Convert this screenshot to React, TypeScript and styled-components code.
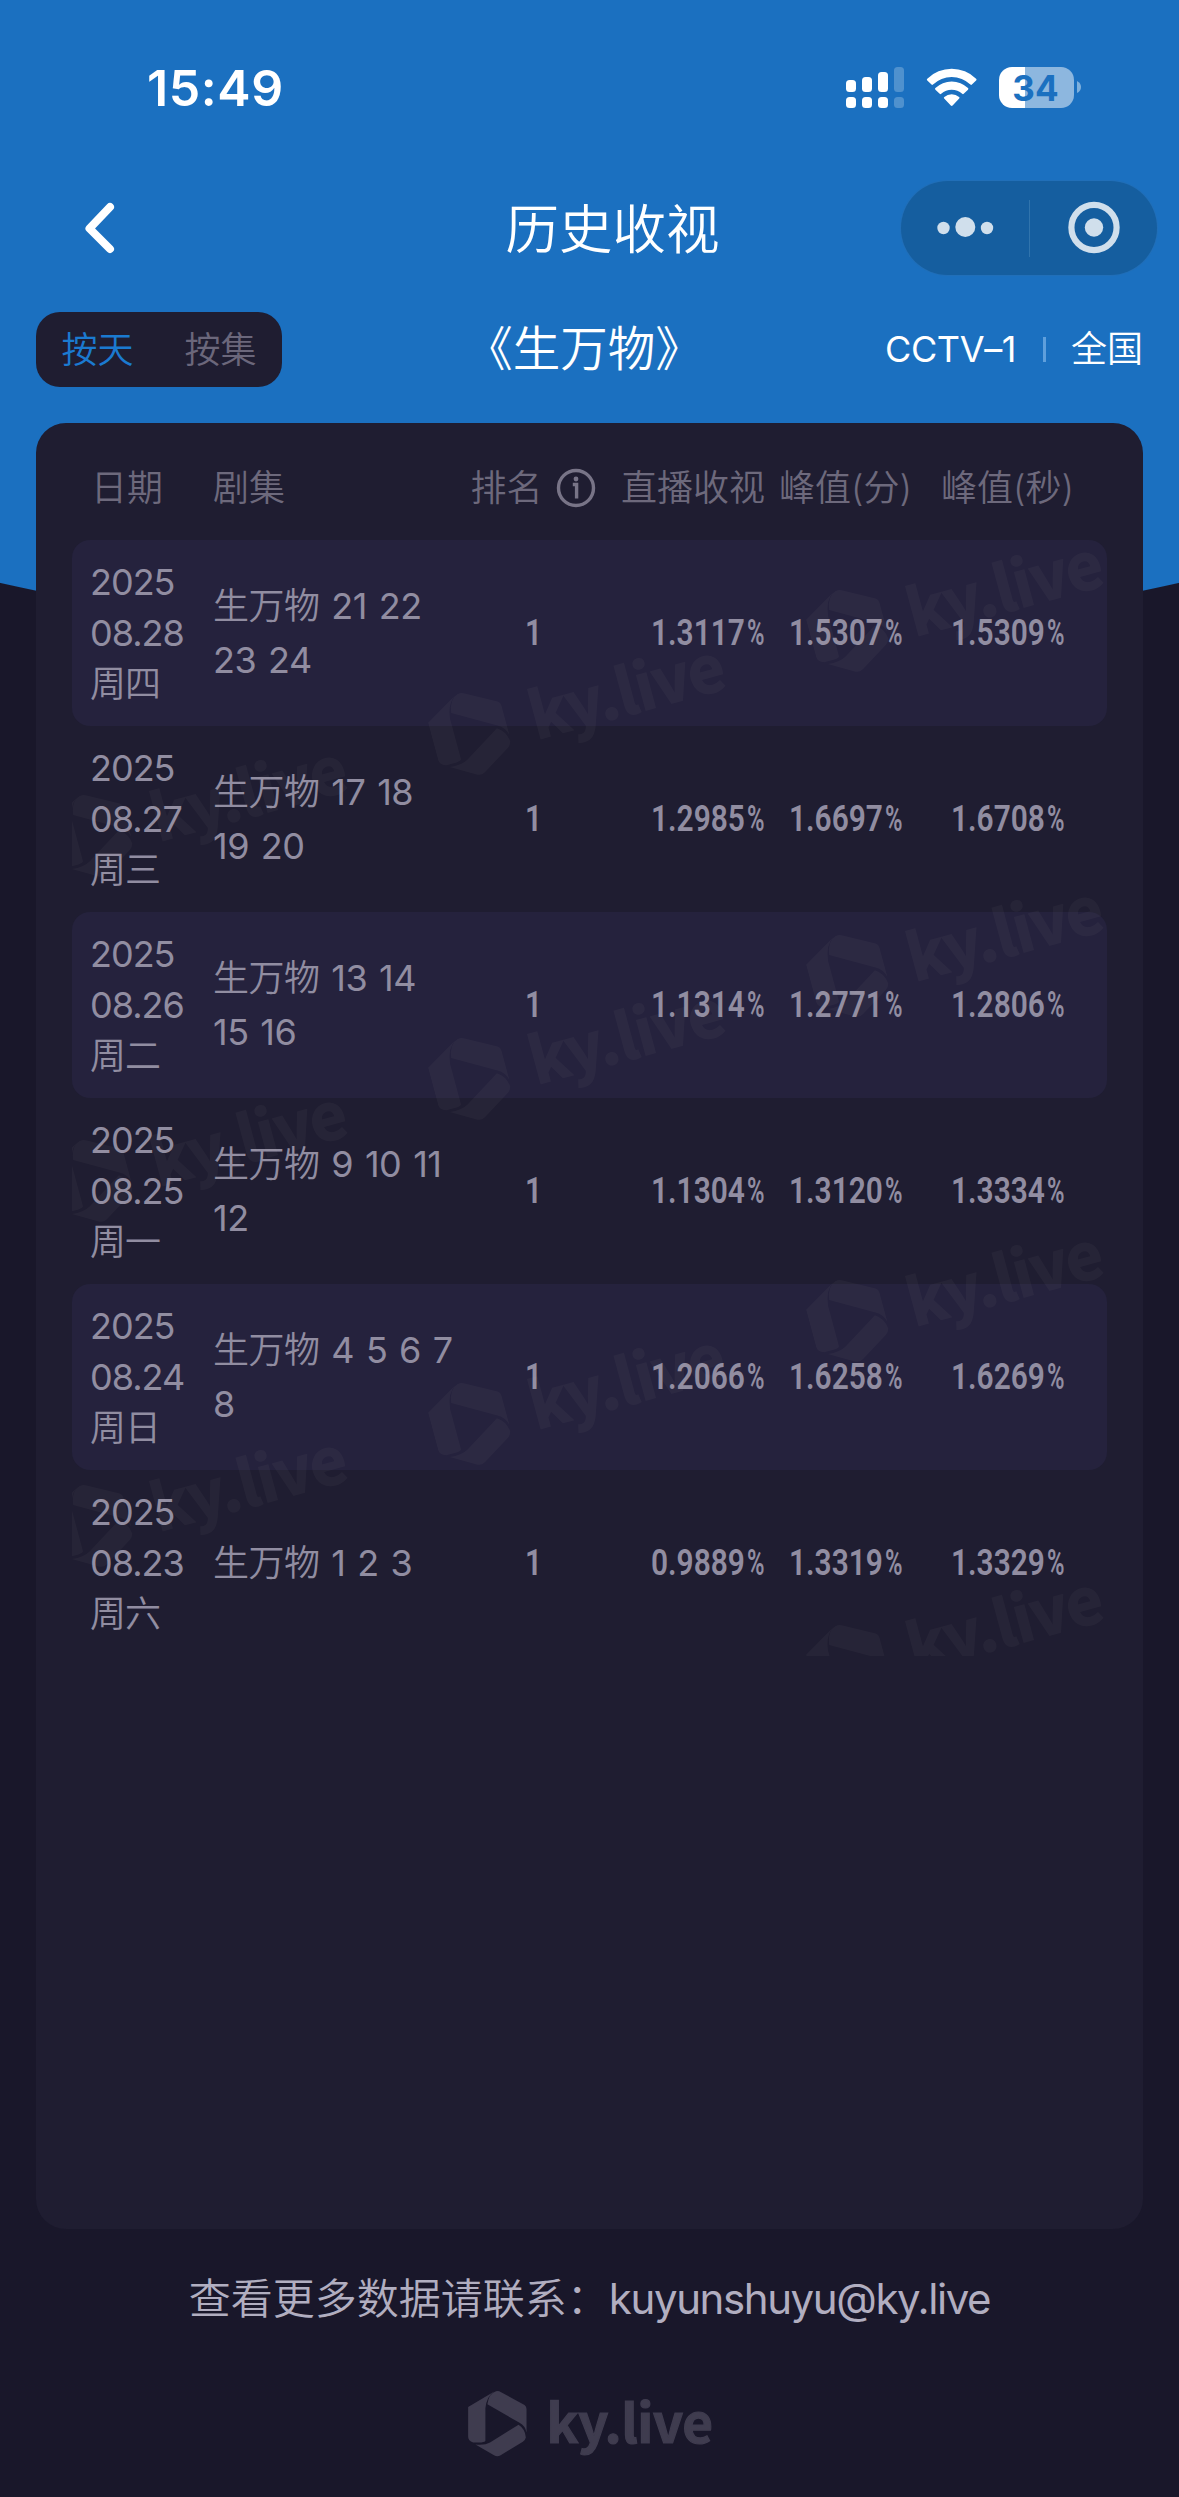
import React from "react";
import styled, { createGlobalStyle } from "styled-components";

const BLUE = "#1b70c0";
const DARK = "#19172a";
const PANEL = "#1f1d31";

const GlobalStyle = createGlobalStyle`
  * { box-sizing: border-box; }
  body { margin: 0; background: ${DARK}; }
`;

const Page = styled.div`
  width: 1179px;
  height: 2497px;
  overflow: hidden;
  display: flex;
  flex-direction: column;
  font-family: Inter, "Noto Sans CJK SC DemiLight", "Noto Sans CJK SC", sans-serif;
  font-size: 36px;
  font-weight: 400;
  color: #fff;
  background: radial-gradient(circle at 50% -2052px, ${BLUE} 2699.5px, ${DARK} 2700.5px);
`;

const StatusBar = styled.div`
  height: 176px;
  display: flex;
  justify-content: space-between;
  padding: 0 98px 0 147px;
`;

const Clock = styled.div`
  height: 176px;
  line-height: 176px;
  font-size: 50px;
  font-weight: 600;
  letter-spacing: 0.6px;
`;

const StatusIcons = styled.div`
  display: flex;
  align-items: flex-start;
  padding-top: 67px;
`;

const SignalIcon = styled.svg`
  width: 58px;
  height: 41px;
  margin-right: 22px;
`;

const WifiIcon = styled.svg`
  width: 52px;
  height: 41px;
  margin-right: 21px;
`;

const Battery = styled.div`
  width: 75px;
  height: 41px;
  border-radius: 13px;
  background: linear-gradient(90deg, #fff 26px, #8db7df 26px);
  color: ${BLUE};
  font-size: 35px;
  font-weight: 700;
  line-height: 42px;
  text-align: center;
  padding-right: 2px;
`;

const BatteryCap = styled.svg`
  width: 4px;
  height: 12px;
  margin: 14px 0 0 3px;
`;

const NavBar = styled.div`
  height: 104px;
  display: grid;
  grid-template-columns: 483px 1fr 414px;
  align-items: center;
  padding-right: 22px;
`;

const BackIcon = styled.svg`
  width: 30px;
  height: 52px;
  margin-left: 85px;
`;

const PageTitle = styled.h1`
  margin: 0 0 0 -1px;
  padding-top: 4px;
  font-size: 53.5px;
  font-weight: 350;
  line-height: 100px;
  text-align: center;
  white-space: nowrap;
`;

const Capsule = styled.div`
  justify-self: end;
  width: 256px;
  height: 94px;
  border-radius: 47px;
  background: #155e9f;
  box-shadow: 0 0 0 1px rgba(40, 110, 175, 0.5);
`;

const FilterBar = styled.div`
  height: 143px;
  display: grid;
  grid-template-columns: 395px 1fr 400px;
  align-items: center;
  padding: 0 36px 5px 36px;
`;

const Tabs = styled.div`
  display: flex;
  width: 246px;
  height: 75px;
  border-radius: 24px;
  background: ${PANEL};
`;

const Tab = styled.button<{ $active?: boolean }>`
  flex: 1;
  border: 0;
  padding: 0;
  background: none;
  font: inherit;
  line-height: 76px;
  color: ${(p) => (p.$active ? "#1b7ad0" : "#6b677b")};
`;

const ShowTitle = styled.div`
  font-size: 47.5px;
  font-weight: 350;
  line-height: 73px;
  padding-bottom: 1px;
  text-align: center;
  white-space: nowrap;
  margin: 0 -4px 0 -10px;
`;

const Channel = styled.div`
  display: flex;
  justify-content: flex-end;
  align-items: center;
  line-height: 76px;
`;

const ChannelName = styled.span`
  letter-spacing: -0.4px;
`;

const Separator = styled.span`
  width: 3px;
  height: 25px;
  background: #5f9fdc;
  margin: 0 25px 0 27px;
`;

const Card = styled.main`
  margin: 0 36px;
  height: 1806px;
  padding: 13px 36px 0;
  border-radius: 30px;
  background: ${PANEL};
`;

const columns = "122px 252px 136px 164px 161px 163px";

const TableHead = styled.div`
  display: grid;
  grid-template-columns: ${columns};
  padding-left: 19px;
  height: 104px;
  line-height: 102px;
  color: #6d697c;
  white-space: nowrap;
  font-weight: 350;
`;

const HeadCell = styled.div<{ $align?: string }>`
  display: flex;
  align-items: center;
  justify-content: ${(p) => p.$align || "flex-start"};
`;

const InfoIcon = styled.svg`
  width: 40px;
  height: 40px;
  margin-left: 13px;
`;

const TableBody = styled.div`
  position: relative;
  overflow: hidden;
  height: 1116px;
`;

const Row = styled.div<{ $striped: boolean }>`
  display: grid;
  grid-template-columns: ${columns};
  align-items: center;
  padding-left: 19px;
  height: 186px;
  border-radius: 18px;
  color: #918da1;
  background: ${(p) => (p.$striped ? "#25223d" : "transparent")};
`;

const DateCell = styled.div`
  margin-left: -1px;
  line-height: 51px;
  letter-spacing: -1px;
  white-space: pre-line;
`;

const EpisodeCell = styled.div`
  padding-bottom: 1px;
  line-height: 54px;
  letter-spacing: -0.5px;
  word-spacing: 2.2px;
  white-space: pre-line;
`;

const NumberCell = styled.div<{ $align?: string; $inset?: number }>`
  display: flex;
  justify-content: ${(p) => p.$align || "center"};
  padding-right: ${(p) => p.$inset || 0}px;
  font-family: Roboto, sans-serif;
  font-weight: 600;
  line-height: 51px;
`;

const Digits = styled.span<{ $width: number }>`
  width: ${(p) => p.$width}px;
  transform: scaleX(0.83);
  transform-origin: left center;
`;

const Percent = styled.span`
  width: 16px;
  margin-left: -1px;
  transform: scaleX(0.66);
  transform-origin: left center;
`;

const Watermark = styled.div<{ $x: number; $y: number }>`
  position: absolute;
  left: ${(p) => p.$x}px;
  top: ${(p) => p.$y}px;
  transform: rotate(-15.1deg);
  transform-origin: 37px 41px;
  opacity: 0.038;
  pointer-events: none;
`;

const Brand = styled.div<{ $scale: number; $color: string }>`
  display: flex;
  align-items: center;
  height: ${(p) => 66 * p.$scale}px;
  color: ${(p) => p.$color};

  svg {
    width: ${(p) => 59 * p.$scale}px;
    height: ${(p) => 66 * p.$scale}px;
  }
`;

const BrandName = styled.span<{ $scale: number; $gap: number }>`
  margin-left: ${(p) => p.$gap}px;
  font-family: "Noto Sans CJK SC", sans-serif;
  font-weight: 700;
  font-size: ${(p) => 53 * p.$scale}px;
  line-height: 1;
  white-space: nowrap;
  letter-spacing: ${(p) => -0.6 * p.$scale}px;
  padding-bottom: ${(p) => 8 * p.$scale}px;
  -webkit-text-stroke: ${(p) => 1.2 * p.$scale}px currentColor;
`;

const Footer = styled.footer`
  flex: 1;
  display: flex;
  flex-direction: column;
  align-items: center;
`;

const Contact = styled.div`
  margin-top: 34px;
  height: 72px;
  line-height: 72px;
  font-size: 42px;
  color: #b1aec0;
  white-space: nowrap;
`;

const Email = styled.span`
  letter-spacing: -1.4px;
`;

const FooterBrand = styled.div`
  margin: 56px 0 0 1px;
`;

function KyLive({ scale, textScale, gap, color }: { scale: number; textScale: number; gap: number; color: string }) {
  return (
    <Brand $scale={scale} $color={color}>
      <svg viewBox="0 0 177 199" fill="currentColor">
        <path d="M0 48 L80 1 Q56 15 52 52 L52 150 Q52 153 40 155 L15 155 Q0 150 0 138Z" />
        <path d="M84 1 Q92 -1 98 3 L170 42 Q176 46 176 54 L176 125 Q172 105 155 96 L58 40 Q62 8 84 1Z" />
        <path d="M152 102 Q172 115 174 140 Q172 148 165 153 L98 194 Q88 200 78 194 L22 161 Q50 164 66 155Z" />
      </svg>
      <BrandName $scale={textScale} $gap={gap}>
        ky.live
      </BrandName>
    </Brand>
  );
}

function Rating({ value, align }: { value: string; align?: string }) {
  return (
    <NumberCell $align={align} $inset={2}>
      <Digits $width={97}>{value}</Digits>
      <Percent>%</Percent>
    </NumberCell>
  );
}

const rows = [
  { date: "2025\n08.28\n周四", show: "生万物 21 22\n23 24", rank: 1, live: "1.3117", minute: "1.5307", second: "1.5309" },
  { date: "2025\n08.27\n周三", show: "生万物 17 18\n19 20", rank: 1, live: "1.2985", minute: "1.6697", second: "1.6708" },
  { date: "2025\n08.26\n周二", show: "生万物 13 14\n15 16", rank: 1, live: "1.1314", minute: "1.2771", second: "1.2806" },
  { date: "2025\n08.25\n周一", show: "生万物 9 10 11\n12", rank: 1, live: "1.1304", minute: "1.3120", second: "1.3334" },
  { date: "2025\n08.24\n周日", show: "生万物 4 5 6 7\n8", rank: 1, live: "1.2066", minute: "1.6258", second: "1.6269" },
  { date: "2025\n08.23\n周六", show: "生万物 1 2 3", rank: 1, live: "0.9889", minute: "1.3319", second: "1.3329" },
];

const watermarks = [0, 1, 2, 3]
  .flatMap((n) => [
    { x: -18, y: 254 + n * 345 },
    { x: 360, y: 151.5 + n * 345 },
    { x: 738, y: 49 + n * 345 },
  ])
  .filter((mark) => mark.y < 1116);

export default function App() {
  return (
    <Page>
      <GlobalStyle />
      <StatusBar>
        <Clock>15:49</Clock>
        <StatusIcons>
          <SignalIcon viewBox="0 0 58 41" fill="#fff">
            <rect x="0" y="13" width="10" height="12" rx="3.5" />
            <rect x="16" y="10" width="10" height="15" rx="3.5" />
            <rect x="32" y="5" width="10" height="20" rx="3.5" />
            <rect x="48" y="0" width="10" height="25" rx="3.5" opacity=".23" />
            <rect x="0" y="30" width="10" height="11" rx="3.5" />
            <rect x="16" y="30" width="10" height="11" rx="3.5" />
            <rect x="32" y="30" width="10" height="11" rx="3.5" />
            <rect x="48" y="30" width="10" height="11" rx="3.5" opacity=".23" />
          </SignalIcon>
          <WifiIcon viewBox="0 0 52 41" fill="#fff">
            <path d="M1.3 11.7 A35 35 0 0 1 50.1 11.7 Q51 12.6 50.1 13.5 L45.9 17.6 Q45.2 18.3 44.4 17.6 A27 27 0 0 0 7 17.6 Q6.2 18.3 5.5 17.6 L1.3 13.5 Q.4 12.6 1.3 11.7Z" />
            <path d="M9.4 21.1 A23.5 23.5 0 0 1 42 21.1 Q42.8 21.9 42 22.7 L37.7 26.8 Q37 27.5 36.2 26.8 A15.5 15.5 0 0 0 15.2 26.8 Q14.4 27.5 13.7 26.8 L9.4 22.7 Q8.6 21.9 9.4 21.1Z" />
            <path d="M18.3 30 A11.5 11.5 0 0 1 33.1 30 Q34 30.8 33.2 31.6 L26.6 38.5 Q25.7 39.3 24.8 38.5 L18.2 31.6 Q17.4 30.8 18.3 30Z" />
          </WifiIcon>
          <Battery>34</Battery>
          <BatteryCap viewBox="0 0 4 12">
            <path d="M0 0 Q4 2 4 6 Q4 10 0 12Z" fill="#7fb0dc" />
          </BatteryCap>
        </StatusIcons>
      </StatusBar>

      <NavBar>
        <BackIcon viewBox="0 0 30 52" fill="none" stroke="#fff" strokeWidth="8" strokeLinecap="round" strokeLinejoin="round">
          <path d="M25 5 L4.5 26.5 L25 47" />
        </BackIcon>
        <PageTitle>历史收视</PageTitle>
        <Capsule>
          <svg width="256" height="94" viewBox="0 0 256 94" fill="#d0dfec">
            <circle cx="42.5" cy="47" r="6.2" />
            <circle cx="64.3" cy="46" r="10" />
            <circle cx="86" cy="47" r="6.2" />
            <rect x="128" y="19" width="1" height="57" fill="#3074ad" />
            <circle cx="193" cy="46.5" r="22.6" fill="none" stroke="#d0dfec" strokeWidth="6.2" />
            <circle cx="193" cy="46.5" r="9.2" />
          </svg>
        </Capsule>
      </NavBar>

      <FilterBar>
        <Tabs>
          <Tab $active>按天</Tab>
          <Tab>按集</Tab>
        </Tabs>
        <ShowTitle>《生万物》</ShowTitle>
        <Channel>
          <ChannelName>CCTV–1</ChannelName>
          <Separator />
          <span>全国</span>
        </Channel>
      </FilterBar>

      <Card>
        <TableHead>
          <HeadCell>日期</HeadCell>
          <HeadCell>剧集</HeadCell>
          <HeadCell $align="center">
            排名
            <InfoIcon viewBox="0 0 40 40" fill="none" stroke="#787487" strokeWidth="3.4">
              <circle cx="20" cy="20" r="17.5" />
              <path d="M16.8 16.5 H20.6 V30.5" />
              <circle cx="20" cy="11" r="2.4" fill="#787487" stroke="none" />
            </InfoIcon>
          </HeadCell>
          <HeadCell $align="flex-end">直播收视</HeadCell>
          <HeadCell $align="center">峰值(分)</HeadCell>
          <HeadCell $align="center">峰值(秒)</HeadCell>
        </TableHead>
        <TableBody>
          {rows.map((row, i) => (
            <Row key={row.date} $striped={i % 2 === 0}>
              <DateCell>{row.date}</DateCell>
              <EpisodeCell>{row.show}</EpisodeCell>
              <NumberCell>
                <Digits $width={17}>{row.rank}</Digits>
              </NumberCell>
              <Rating value={row.live} align="flex-end" />
              <Rating value={row.minute} />
              <Rating value={row.second} />
            </Row>
          ))}
          {watermarks.map((mark) => (
            <Watermark key={`${mark.x}-${mark.y}`} $x={mark.x} $y={mark.y}>
              <KyLive scale={1.29} textScale={1.2} gap={24} color="#d8d0c4" />
            </Watermark>
          ))}
        </TableBody>
      </Card>

      <Footer>
        <Contact>
          查看更多数据请联系：<Email>kuyunshuyu@ky.live</Email>
        </Contact>
        <FooterBrand>
          <KyLive scale={1} textScale={1} gap={20} color="#3f3c4f" />
        </FooterBrand>
      </Footer>
    </Page>
  );
}
